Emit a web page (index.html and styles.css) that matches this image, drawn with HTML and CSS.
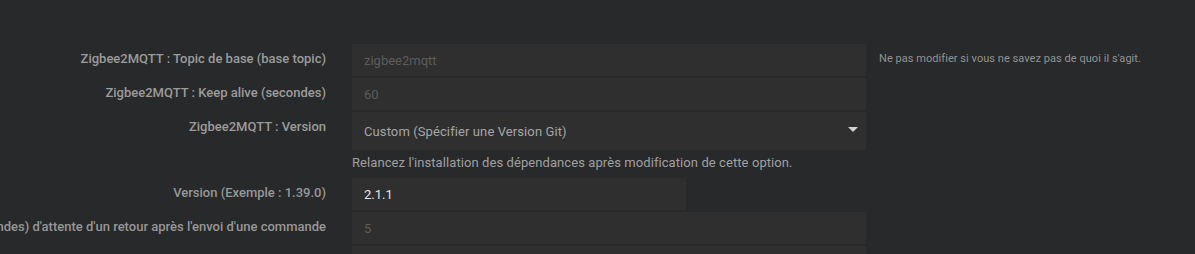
FILE: index.html
```html
<!DOCTYPE html>
<html lang="fr">
<head>
    <meta charset="UTF-8">
    <meta name="viewport" content="width=device-width, initial-scale=1.0">
    <title>Zigbee2MQTT - Configuration</title>
    <link rel="stylesheet" href="styles.css">
</head>
<body>
    <form class="config-form">
        <div class="form-group">
            <label class="control-label">Zigbee2MQTT : Topic de base (base topic)</label>
            <div class="control">
                <input type="text" class="form-control" placeholder="zigbee2mqtt">
            </div>
            <div class="hint">Ne pas modifier si vous ne savez pas de quoi il s'agit.</div>
        </div>
        <div class="form-group">
            <label class="control-label">Zigbee2MQTT : Keep alive (secondes)</label>
            <div class="control">
                <input type="text" class="form-control" placeholder="60">
            </div>
        </div>
        <div class="form-group">
            <label class="control-label">Zigbee2MQTT : Version</label>
            <div class="control">
                <div class="select-wrap">
                    <select class="form-control select">
                        <option>Custom (Spécifier une Version Git)</option>
                        <option>Dernière version</option>
                    </select>
                </div>
                <div class="help-block">Relancez l'installation des dépendances après modification de cette option.</div>
            </div>
        </div>
        <div class="form-group">
            <label class="control-label light">Version (Exemple : 1.39.0)</label>
            <div class="control">
                <input type="text" class="form-control short" value="2.1.1">
            </div>
        </div>
        <div class="form-group">
            <label class="control-label light">Temps (secondes) d'attente d'un retour après l'envoi d'une commande</label>
            <div class="control">
                <input type="text" class="form-control" placeholder="5">
            </div>
        </div>
        <div class="form-group last">
            <div class="control-label"></div>
            <div class="control">
                <input type="text" class="form-control" placeholder="">
            </div>
        </div>
    </form>
</body>
</html>
```

FILE: styles.css
```css
body {
    margin: 0;
    background-color: #28292a;
    font-family: Roboto, "Liberation Sans", sans-serif;
    color: #9b9b9b;
    overflow: hidden;
}

.config-form {
    padding-top: 44px;
}

.form-group {
    display: grid;
    grid-template-columns: 352px 514px 1fr;
    margin-bottom: 2px;
}

.control-label {
    display: flex;
    justify-content: flex-end;
    white-space: nowrap;
    padding-top: 6px;
    padding-right: 26px;
    font-size: 13px;
    line-height: 17px;
    font-weight: 500;
    color: #9b9b9b;
    min-width: 0;
}

.control-label.light {
    color: #979797;
}

.control {
    min-width: 0;
}

.form-control {
    display: block;
    box-sizing: border-box;
    width: 100%;
    height: 32px;
    padding: 0 12px;
    border: none;
    border-radius: 0;
    background-color: #2f2f2f;
    color: #e4e4e4;
    font-family: Roboto, "Liberation Sans", sans-serif;
    font-size: 13px;
    outline: none;
}

.form-control::placeholder {
    color: #5c5c5c;
}

.form-control.short {
    width: 334px;
}

.select-wrap {
    position: relative;
}

.select {
    height: 38px;
    appearance: none;
    -webkit-appearance: none;
    color: #a6a6a6;
    letter-spacing: 0.1px;
}

.select-wrap::after {
    content: "";
    position: absolute;
    right: 8px;
    top: 15px;
    border-left: 5px solid transparent;
    border-right: 5px solid transparent;
    border-top: 5px solid #d2d2d2;
    pointer-events: none;
}

.help-block {
    margin: 4px 0 5px;
    font-size: 13px;
    line-height: 17px;
    color: #a0a0a0;
    letter-spacing: 0.08px;
    white-space: nowrap;
}

.hint {
    padding-top: 6px;
    padding-left: 13px;
    font-size: 11px;
    line-height: 17px;
    color: #939393;
    letter-spacing: 0.05px;
    white-space: nowrap;
}
```
